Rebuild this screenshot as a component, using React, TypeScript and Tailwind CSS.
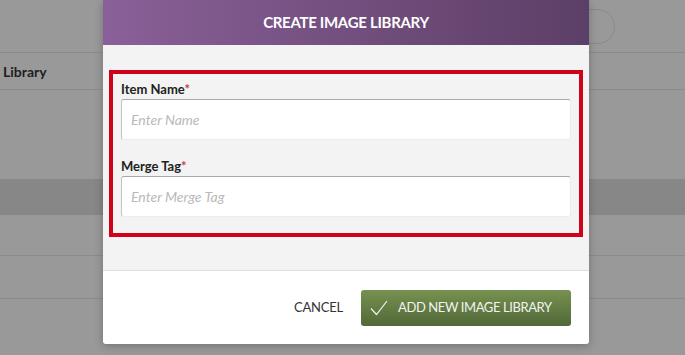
import { useState } from 'react'

const font = { fontFamily: 'Lato, "Open Sans", sans-serif' }

function Field({ label, placeholder }: { label: string; placeholder: string }) {
  const [value, setValue] = useState('')
  return (
    <div className="flex flex-col">
      <label className="text-[13px] font-bold leading-[20px] text-[#222]">
        {label}
        <span className="text-[#d0394a]">*</span>
      </label>
      <input
        value={value}
        onChange={e => setValue(e.target.value)}
        placeholder={placeholder}
        className="h-[41px] w-full rounded-[3px] border border-[#ececec] border-t-[#a9a9a9] border-l-[#c4c4c4] bg-white px-[9px] text-[14px] italic text-[#333] outline-none placeholder:text-[#b9b9b9]"
      />
    </div>
  )
}

export default function App() {
  return (
    <div className="relative h-[355px] w-[685px] overflow-hidden bg-[#999999]" style={font}>
      {/* page behind the overlay */}
      <div className="flex h-[53px] items-center justify-end border-b border-[#8b8b8b] pr-[70px]">
        <div className="h-[35px] w-[200px] rounded-full border border-[#8a8a8a]" />
      </div>
      <div className="flex h-[37px] items-center border-b border-[#8b8b8b] pl-[3px] text-[14px] font-bold text-[#1f1f1f]">
        Library
      </div>
      <div className="h-[89px]" />
      <div className="h-[36px] bg-[#878787]" />
      <div className="h-[41px] border-b border-[#8b8b8b]" />
      <div className="h-[43px] border-b border-[#8b8b8b]" />

      {/* modal */}
      <div className="absolute left-[103px] top-0 flex w-[486px] flex-col overflow-hidden rounded-b-[3px] shadow-[0_2px_8px_rgba(0,0,0,0.25)]">
        <div className="flex h-[45px] items-center justify-center bg-gradient-to-r from-[#8a6098] to-[#5c3f66] text-[15px] font-bold tracking-[-0.3px] text-white">
          CREATE IMAGE LIBRARY
        </div>
        <div className="bg-[#f3f3f3] px-[6px] pb-[33px] pt-[25px]">
          <div className="flex flex-col gap-[16px] border-4 border-[#d0021b] px-[8px] pb-[16px] pt-[5px]">
            <Field label="Item Name" placeholder="Enter Name" />
            <Field label="Merge Tag" placeholder="Enter Merge Tag" />
          </div>
        </div>
        <div className="flex h-[74px] items-center justify-end gap-[18px] border-t border-[#dedede] bg-white pr-[18px]">
          <button className="text-[13px] tracking-[-0.2px] text-[#333]">CANCEL</button>
          <button className="flex h-[36px] w-[210px] items-center gap-[10px] rounded-[3px] bg-gradient-to-b from-[#769250] to-[#526838] pl-[9px] text-[13px] tracking-[-0.4px] text-[#f2f2f2]">
            <svg width="18" height="16" viewBox="0 0 18 16" fill="none">
              <path d="M1 8.5 L6.5 14.5 L17 1" stroke="#f2f2f2" strokeWidth="1.2" />
            </svg>
            ADD NEW IMAGE LIBRARY
          </button>
        </div>
      </div>
    </div>
  )
}
